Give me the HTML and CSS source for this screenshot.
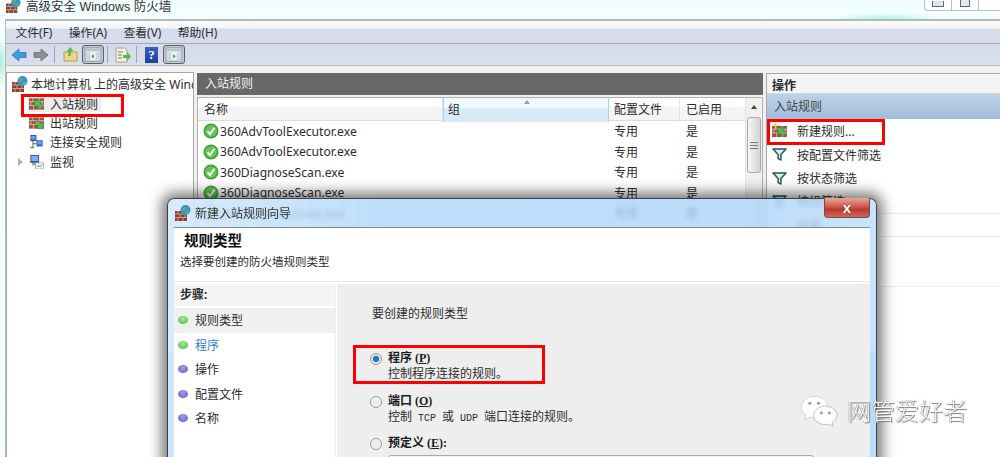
FILE: index.html
```html
<!DOCTYPE html>
<html lang="zh-CN">
<head>
<meta charset="utf-8">
<title>高级安全 Windows 防火墙</title>
<link rel="stylesheet" href="styles.css">
</head>
<body>
<svg class="defs" width="0" height="0" aria-hidden="true">
  <defs>
    <symbol id="wall" viewBox="0 0 16 14">
      <rect x="0" y="1" width="16" height="12" fill="#9c5442"/>
      <path d="M0 4.500h16M0 8.500h16M4 1v3.500M11 1v3.500M2 4.500v4M8 4.500v4M14 4.500v4M5 8.500V13M11 8.500V13" stroke="#dcc4b4" stroke-width=".9" fill="none"/>
    </symbol>
    <symbol id="wall-in" viewBox="0 0 16 14">
      <use href="#wall"/>
      <path d="M6 3l7 0-2 2.200 4 4-3 3-4-4L6 10z" fill="#52bd55" stroke="#2f8f3a" stroke-width=".6"/>
    </symbol>
    <symbol id="wall-out" viewBox="0 0 16 14">
      <use href="#wall"/>
      <path d="M15 13l-7 0 2-2.200-4-4 3-3 4 4L15 6z" fill="#52bd55" stroke="#2f8f3a" stroke-width=".6"/>
    </symbol>
    <symbol id="wall-globe" viewBox="0 0 16 16">
      <rect x="0" y="6" width="12" height="10" fill="#8c3f2e"/>
      <path d="M0 9h12M0 12.500h12M3 6v3M8 6v3M5 9v3.500M10 9v3.500M3 12.500V16M8 12.500V16" stroke="#d8b8a8" stroke-width=".8" fill="none"/>
      <circle cx="10.500" cy="5" r="5" fill="#3d8fd8"/>
      <path d="M7.500 3.500c1.500-2 3-1.500 3.500-.5s-1.500 1.500-1.500 2.500-2 1-2-2zM11.500 6c1-.5 2.500-.5 3 .5-.5 1.500-2 2.500-3 2.500s-1-2 0-3z" fill="#5cb85a"/>
    </symbol>
    <symbol id="link" viewBox="0 0 16 16">
      <rect x="1" y="0" width="7" height="7" fill="#2a55c0"/><rect x="2" y="1" width="5" height="4" fill="#6aa0ea"/>
      <rect x="8" y="6" width="7" height="7" fill="#2a55c0"/><rect x="9" y="7" width="5" height="4" fill="#6aa0ea"/>
      <path d="M0 15h6l-2-3z" fill="#43ad4a"/><path d="M4 7v5M8 10H5" stroke="#333" fill="none"/>
    </symbol>
    <symbol id="monitor" viewBox="0 0 16 16">
      <rect x="1" y="0" width="10" height="9" fill="#2a4fa8"/><rect x="2" y="1" width="8" height="6" fill="#7fb0ea"/>
      <rect x="3" y="9" width="6" height="3" fill="#9aa0a8"/>
      <rect x="7" y="9" width="9" height="7" fill="#f4f7f2" stroke="#8a9a8a" stroke-width=".7"/>
      <path d="M8 14l2-2 2 1.500 3-3" stroke="#38a040" fill="none"/>
    </symbol>
    <symbol id="ok" viewBox="0 0 16 16">
      <circle cx="8" cy="8" r="7.500" fill="#3e9a3b"/><circle cx="8" cy="8" r="6" fill="#62c552"/>
      <path d="M4.500 8.200l2.500 3 4.500-6.500" stroke="#fff" stroke-width="2" fill="none"/>
    </symbol>
    <symbol id="funnel" viewBox="0 0 16 14">
      <path d="M1 1h14L9.500 7v6l-3-1.500V7z" fill="#d8ece8" stroke="#1f5a5c" stroke-width="1.600" stroke-linejoin="round"/>
    </symbol>
    <symbol id="star" viewBox="0 0 8 8">
      <path d="M4 0l1 3 3 1-3 1-1 3-1-3-3-1 3-1z" fill="#f3c63a"/>
    </symbol>
    <symbol id="panel" viewBox="0 0 20 17">
      <rect x="1" y="1" width="18" height="15" fill="#f1f4f4" stroke="#7f8a90"/>
      <rect x="2" y="2" width="16" height="3" fill="#b8c4cc"/>
      <rect x="2" y="6" width="5" height="9" fill="#c7d8e6"/><rect x="13" y="6" width="5" height="9" fill="#c7d8e6"/>
    </symbol>
  </defs>
</svg>

<div class="app">
  <header class="titlebar">
    <svg class="title-icon"><use href="#wall-globe"/></svg>
    <span class="title-text">高级安全 Windows 防火墙</span>
    <div class="winbtns">
      <span class="winbtn"><i class="glyph-min"></i></span>
      <span class="winbtn"><i class="glyph-max"></i></span>
      <span class="winbtn winbtn-close"></span>
    </div>
  </header>

  <div class="frame">
    <nav class="menubar">
      <span>文件(F)</span><span>操作(A)</span><span>查看(V)</span><span>帮助(H)</span>
    </nav>
    <div class="toolbar">
      <svg class="tb-arrow" viewBox="0 0 16 14"><path d="M1 7l7-6v3.500h7v5H8V13z" fill="#3f9be0" stroke="#2a74b8" stroke-width=".8"/></svg>
      <svg class="tb-arrow tb-next" viewBox="0 0 16 14"><path d="M15 7L8 1v3.500H1v5h7V13z" fill="#8a8f92" stroke="#6a6f72" stroke-width=".8"/></svg>
      <i class="tb-sep"></i>
      <svg class="tb-up" viewBox="0 0 15 15"><path d="M1 5h13v9H1z" fill="#ecd68c" stroke="#b59a4a"/><path d="M5 9l1-4H3.500L7 0l3.500 4H8L7.500 9z" fill="#5ab44a"/></svg>
      <span class="tb-btn"><svg viewBox="0 0 20 17"><use href="#panel"/><path d="M11 8v5l-3-2.500z" fill="#36a040"/></svg></span>
      <i class="tb-sep tb-sep-b"></i>
      <svg class="tb-export" viewBox="0 0 16 16"><path d="M1 1h9l2 2v12H1z" fill="#f6f1dc" stroke="#a8a48c"/><path d="M3 5h5M3 8h4M3 11h4" stroke="#777"/><path d="M8 8h4V5l4 4.500-4 4.500v-3H8z" fill="#55b84a"/></svg>
      <i class="tb-sep tb-sep-c"></i>
      <span class="tb-help">?</span>
      <span class="tb-btn tb-btn-b"><svg viewBox="0 0 20 17"><use href="#panel"/><path d="M9 8v5l3-2.500z" fill="#36a040"/></svg></span>
    </div>

    <main class="panes">
      <aside class="tree">
        <div class="tree-row tree-root"><svg class="tree-icon"><use href="#wall-globe"/></svg><span>本地计算机 上的高级安全 Windows 防火墙</span></div>
        <div class="tree-row tree-child"><span class="tree-sel"><svg class="tree-icon"><use href="#wall-in"/></svg><span>入站规则</span></span></div>
        <div class="tree-row tree-child"><svg class="tree-icon"><use href="#wall-out"/></svg><span>出站规则</span></div>
        <div class="tree-row tree-child"><svg class="tree-icon"><use href="#link"/></svg><span>连接安全规则</span></div>
        <div class="tree-row tree-child tree-last"><i class="twisty"></i><svg class="tree-icon"><use href="#monitor"/></svg><span>监视</span></div>
      </aside>

      <section class="center">
        <h2 class="center-head">入站规则</h2>
        <div class="table-wrap">
          <div class="table">
            <div class="thead">
              <span class="th">名称</span>
              <span class="th th-sorted">组<i class="sort"></i></span>
              <span class="th">配置文件</span>
              <span class="th th-last">已启用</span>
            </div>
            <div class="tr"><span class="td-name"><svg class="ok"><use href="#ok"/></svg>360AdvToolExecutor.exe</span><span></span><span>专用</span><span>是</span></div>
            <div class="tr"><span class="td-name"><svg class="ok"><use href="#ok"/></svg>360AdvToolExecutor.exe</span><span></span><span>专用</span><span>是</span></div>
            <div class="tr"><span class="td-name"><svg class="ok"><use href="#ok"/></svg>360DiagnoseScan.exe</span><span></span><span>专用</span><span>是</span></div>
            <div class="tr"><span class="td-name"><svg class="ok"><use href="#ok"/></svg>360DiagnoseScan.exe</span><span></span><span>专用</span><span>是</span></div>
            <div class="tr"><span class="td-name"><svg class="ok"><use href="#ok"/></svg>360DiagnoseScan.exe</span><span></span><span>专用</span><span>是</span></div>
          </div>
          <div class="scroll">
            <i class="scroll-up"></i>
            <div class="scroll-thumb"><i></i></div>
          </div>
        </div>
      </section>

      <aside class="actions">
        <h3 class="actions-head">操作</h3>
        <div class="actions-sub">入站规则</div>
        <div class="action action-new"><svg class="action-icon"><use href="#wall-in"/></svg><svg class="action-star"><use href="#star"/></svg><span>新建规则...</span></div>
        <div class="action"><svg class="action-icon"><use href="#funnel"/></svg><span>按配置文件筛选</span></div>
        <div class="action"><svg class="action-icon"><use href="#funnel"/></svg><span>按状态筛选</span></div>
        <div class="action action-line"><svg class="action-icon"><use href="#funnel"/></svg><span>按组筛选</span></div>
        <div class="action action-line"><span class="action-blank"></span><span>查看</span></div>
        <div class="action action-tall"></div>
      </aside>
    </main>
  </div>

  <div class="mark mark-tree"></div>
  <div class="mark mark-action"></div>

  <section class="dialog">
    <header class="dlg-title">
      <svg class="dlg-icon"><use href="#wall-globe"/></svg>
      <span>新建入站规则向导</span>
      <span class="dlg-close"><b>x</b></span>
    </header>
    <div class="dlg-body">
      <div class="dlg-head">
        <h1>规则类型</h1>
        <p>选择要创建的防火墙规则类型</p>
      </div>
      <div class="dlg-main">
        <div class="steps">
          <div class="steps-head">步骤:</div>
          <ul class="step-list">
            <li class="step step-current"><i class="dot dot-green"></i>规则类型</li>
            <li class="step step-next"><i class="dot dot-green"></i>程序</li>
            <li class="step"><i class="dot"></i>操作</li>
            <li class="step"><i class="dot"></i>配置文件</li>
            <li class="step"><i class="dot"></i>名称</li>
          </ul>
        </div>
        <div class="content">
          <p class="question">要创建的规则类型</p>
          <div class="opt opt-first">
            <i class="radio radio-on"></i>
            <div><div class="opt-name">程序 (<u>P</u>)</div><div class="opt-desc">控制程序连接的规则。</div></div>
          </div>
          <div class="opt">
            <i class="radio"></i>
            <div><div class="opt-name">端口 (<u>O</u>)</div><div class="opt-desc">控制<span class="mono">TCP</span>或<span class="mono">UDP</span>端口连接的规则。</div></div>
          </div>
          <div class="opt opt-last">
            <i class="radio"></i>
            <div class="opt-wide"><div class="opt-name">预定义 (<u>E</u>):</div><div class="select">BranchCache - 对等机发现</div></div>
          </div>
        </div>
      </div>
    </div>
  </section>

  <div class="mark mark-opt"></div>

  <div class="wechat">
    <svg class="wechat-logo" viewBox="0 0 40 34">
      <path d="M15 2C7.500 2 1.500 7 1.500 13c0 3.500 2 6.500 5 8.500L5 26l5-2.800c1.500.4 3 .6 5 .6 7.500 0 13.500-5 13.500-11S22.500 2 15 2z" fill="#fff" stroke="#c8c8c8" stroke-width=".7"/>
      <path d="M26 12c-6.500 0-12 4.300-12 9.500S19.500 31 26 31c1.500 0 2.800-.2 4-.6l4 2.300-1-3.800c3-1.800 5-4.600 5-7.900C38 16.300 32.500 12 26 12z" fill="#fff" stroke="#b0b0b0" stroke-width=".8"/>
      <circle cx="10" cy="9" r="1.600" fill="#9a9a9a"/><circle cx="19" cy="9" r="1.600" fill="#9a9a9a"/>
      <circle cx="22" cy="19" r="1.500" fill="#9a9a9a"/><circle cx="30" cy="19" r="1.500" fill="#9a9a9a"/>
    </svg>
    <span class="wechat-name">网管爱好者</span>
  </div>
</div>
</body>
</html>
```
FILE: styles.css
```css
* { box-sizing: border-box; }
html, body { margin: 0; padding: 0; }
body {
  width: 1000px;
  height: 457px;
  overflow: hidden;
  background: #fff;
  font-family: "Noto Sans", "Noto Sans CJK SC", sans-serif;
  font-size: 12px;
  color: #2c2c2c;
}
.defs { position: absolute; }
h1, h2, h3, p, ul { margin: 0; padding: 0; font: inherit; }
ul { list-style: none; }
i { display: block; }

.app {
  position: relative;
  width: 1000px;
  height: 457px;
  overflow: hidden;
  display: flex;
  flex-direction: column;
  filter: blur(.35px);
  background:
    radial-gradient(ellipse 10px 26px at 0 62px, #a8eedd, transparent),
    linear-gradient(#f6ffff, #f3fdfd);
}

/* title bar */
.titlebar {
  height: 19px;
  flex: none;
  display: flex;
  align-items: flex-start;
  padding-left: 6px;
  background: radial-gradient(ellipse 60px 6px at 885px 19px, #a8f5e6, transparent), linear-gradient(#f2fdff, #f4ffff);
}
.title-icon { width: 15px; height: 15px; margin-top: -2px; }
.title-text {
  margin-left: 5px;
  font-family: "Liberation Sans", "Noto Sans CJK SC", sans-serif;
  font-size: 12.500px;
  line-height: 14px;
  color: #333;
}
.winbtns {
  margin-left: auto;
  margin-right: -4px;
  display: flex;
  height: 11px;
  border: 1px solid #b8c0c4;
  border-top: 0;
  border-radius: 0 0 4px 4px;
  background: #fff;
}
.winbtn { width: 27px; border-right: 1px solid #b8c0c4; display: flex; justify-content: center; }
.winbtn-close { width: 24px; border-right: 0; }
.glyph-min { width: 12px; height: 6px; margin-top: 1px; border: 1px solid #666; border-top: 0; background: #dfe3ea; }
.glyph-max { width: 10px; height: 7px; border: 1.500px solid #666; border-top: 0; background: #e6e9ef; }

/* frame */
.frame {
  flex: 1;
  min-height: 0;
  margin-left: 5px;
  border-top: 2px solid #b4b8b8;
  border-left: 1px solid #b4b8b8;
  display: flex;
  flex-direction: column;
  background: #f0f0f0;
}
.menubar {
  height: 23px;
  flex: none;
  display: flex;
  align-items: center;
  gap: 16.500px;
  padding: 0 0 1px 9.500px;
  background: linear-gradient(#fbfbfc 0, #f4f5f8 7px, #d6dcec 8px, #d6dcec 100%);
  border-bottom: 1px solid #a6a8ac;
  font-size: 11.800px;
}
.toolbar {
  height: 22px;
  flex: none;
  display: flex;
  align-items: center;
  padding-left: 5px;
  background: linear-gradient(#d4daeb, #dadfec);
  border-bottom: 1px solid #b8bcc0;
}
.tb-arrow { width: 16px; height: 14px; }
.tb-next { margin-left: 6px; }
.tb-sep { width: 1px; height: 17px; margin-left: 5px; background: #a0a4ac; }
.tb-sep-b { margin-left: 3px; }
.tb-sep-c { margin-left: 5px; }
.tb-up { width: 15px; height: 15px; margin-left: 8px; }
.tb-btn {
  width: 22px;
  height: 19px;
  margin-left: 4px;
  border: 1px solid #5a5f66;
  border-radius: 3px;
  background: #c6c9d0;
  display: flex;
  align-items: center;
  justify-content: center;
}
.tb-btn svg { width: 18px; height: 15px; }
.tb-btn-b { margin-left: 5px; }
.tb-export { width: 16px; height: 16px; margin-left: 7px; }
.tb-help {
  width: 13px;
  height: 16px;
  margin-left: 8px;
  background: linear-gradient(#3c5fc0, #1f3f9c);
  color: #fff;
  font-weight: 700;
  font-size: 13px;
  line-height: 16px;
  text-align: center;
  font-family: "Liberation Serif", serif;
}

.panes {
  flex: 1;
  min-height: 0;
  display: flex;
  gap: 3px;
  padding-top: 7px;
}

/* tree */
.tree {
  width: 188px;
  flex: none;
  margin-top: -1px;
  background: #fff;
  border: 1px solid #a8a8a8;
  border-bottom: 0;
  overflow: hidden;
  white-space: nowrap;
}
.tree-row { display: flex; align-items: center; height: 19.300px; }
.tree-root { height: 21px; padding-left: 5px; }
.tree-child { padding-left: 22px; }
.tree-icon { width: 15px; height: 14px; flex: none; margin-right: 6px; }
.tree-root .tree-icon { height: 16px; width: 16px; margin-right: 3px; }
.tree-sel {
  display: flex;
  align-items: center;
  height: 16px;
  margin-left: -1px;
  padding: 0 3px 0 1px;
  background: #ececec;
  border-radius: 2px;
}
.tree-last { padding-left: 11px; }
.twisty {
  width: 0;
  height: 0;
  margin-right: 6px;
  border: 4px solid transparent;
  border-left: 5px solid #b0b0b0;
  border-right: 0;
}

/* center */
.center { width: 566px; flex: none; display: flex; flex-direction: column; }
.center-head {
  height: 22px;
  flex: none;
  padding-left: 8px;
  background: #686868;
  color: #f2f2f2;
  line-height: 21px;
}
.table-wrap {
  flex: 1;
  margin-top: 2px;
  background: #fff;
  border: 1px solid #b0b0b0;
  border-bottom: 0;
  display: flex;
}
.table { flex: 1; min-width: 0; }
.thead {
  height: 23px;
  display: grid;
  grid-template-columns: 245px 166px 71px 1fr;
  background: linear-gradient(#fff 0, #fff 40%, #f3f4f6 42%, #f4f4f4 100%);
  border-bottom: 1px solid #dcdcdc;
}
.th { position: relative; padding-left: 6px; line-height: 24px; border-right: 1px solid #e4e4e4; }
.th-sorted {
  padding-left: 4px;
  background: linear-gradient(#f2f9fd 0, #f2f9fd 40%, #d8ecf8 42%, #d6eaf7 100%);
  border-left: 1px solid #a6d4f0;
  border-right: 1px solid #a6d4f0;
}
.th:nth-child(3) { padding-left: 5px; }
.th-last { border-right: 0; }
.sort {
  position: absolute;
  top: 2px;
  left: 80px;
  border: 3.500px solid transparent;
  border-top: 0;
  border-bottom: 4px solid #87a5b8;
}
.tr {
  height: 20.500px;
  display: grid;
  grid-template-columns: 245px 166px 71px 1fr;
  align-items: center;
  white-space: nowrap;
}
.tr > span:nth-child(3) { padding-left: 5px; }
.tr > span:nth-child(4) { padding-left: 6px; }
.td-name { display: flex; align-items: center; padding-left: 5px; font-size: 12.150px; }
.ok { width: 16px; height: 16px; margin-right: 1px; flex: none; }
.scroll {
  width: 17px;
  flex: none;
  background: #f0f0f0;
  border-left: 1px solid #e4e4e4;
  position: relative;
}
.scroll-up {
  width: 0;
  margin: 7px auto 0;
  border: 3.500px solid transparent;
  border-top: 0;
  border-bottom: 4px solid #444;
}
.scroll-thumb {
  margin: 8px 1px 0;
  height: 56px;
  border: 1px solid #a8a8a8;
  border-radius: 3px;
  background: linear-gradient(90deg, #f6f6f6, #d4d4d4);
  display: flex;
  align-items: center;
  justify-content: center;
}
.scroll-thumb i { width: 8px; height: 7px; border-top: 1px solid #777; border-bottom: 1px solid #777; background: linear-gradient(#777, #777) center / 100% 1px no-repeat; }

/* actions */
.actions {
  flex: 1;
  min-width: 0;
  background: #fff;
  border-left: 1px solid #a8a8a8;
  border-top: 1px solid #a8a8a8;
}
.actions-head {
  height: 20px;
  padding-left: 5px;
  font-weight: 700;
  line-height: 23px;
  background: #f4f4f4;
  border-bottom: 1px solid #d8d8d8;
}
.actions-sub {
  height: 25px;
  padding-left: 7px;
  line-height: 25px;
  color: #444;
  background: linear-gradient(#bdd2e8, #9fbcdc);
}
.action {
  position: relative;
  height: 23.500px;
  display: flex;
  align-items: center;
  padding-left: 5px;
}
.action-new { height: 24px; }
.action-icon { width: 15px; height: 13px; margin-right: 10px; flex: none; }
.action-blank { width: 25px; }
.action-star { position: absolute; left: 5px; top: 3px; width: 7px; height: 7px; }
.action-line { border-bottom: 1px solid #eaeaea; }
.action-tall { height: 49.500px; border-bottom: 1px solid #eaeaea; }

/* dialog */
.dialog {
  position: absolute;
  left: 167px;
  top: 198px;
  width: 710px;
  height: 275px;
  border: 1px solid #3a4248;
  border-bottom: 0;
  border-radius: 7px 7px 0 0;
  background:
    linear-gradient(90deg, rgba(232, 243, 252, .55) 0, rgba(176, 216, 250, .45) 30%, rgba(170, 212, 250, .45) 80%, rgba(205, 228, 252, .55) 100%),
    linear-gradient(rgba(170, 212, 250, .65) 0, rgba(170, 212, 250, .65) 152px, rgba(140, 196, 248, .75) 153px);
  -webkit-backdrop-filter: blur(2.500px);
  backdrop-filter: blur(2.500px);
  box-shadow: 0 0 14px 5px rgba(0, 0, 0, .55);
  display: flex;
  flex-direction: column;
}
.dlg-title {
  height: 28px;
  flex: none;
  position: relative;
  display: flex;
  align-items: center;
  padding-left: 7px;
  color: #333;
}
.dlg-icon { width: 16px; height: 16px; margin-right: 4px; }
.dlg-close {
  position: absolute;
  right: 6px;
  top: -1px;
  width: 46px;
  height: 20px;
  border: 1px solid #7a4a44;
  border-top: 0;
  border-radius: 0 0 4px 4px;
  background: linear-gradient(#e6a89c 0, #d0584a 45%, #b93a2e 60%, #cc6a5c 100%);
  color: #fff;
  display: flex;
  align-items: center;
  justify-content: center;
}
.dlg-close b { font-family: "Liberation Sans", sans-serif; font-size: 15px; line-height: 16px; text-shadow: 0 0 2px #555; }
.dlg-body {
  flex: 1;
  min-height: 0;
  margin: 0 6px;
  border-top: 1px solid #808890;
  background: #fff;
  display: flex;
  flex-direction: column;
}
.dlg-head { height: 54px; flex: none; padding: 1px 0 0 10px; border-bottom: 1px solid #e8e8e8; }
.dlg-head h1 { font-size: 14.500px; font-weight: 700; color: #111; line-height: 22px; }
.dlg-head p { margin: 3px 0 0 -4px; line-height: 16px; font-size: 11.500px; }
.dlg-main { flex: 1; display: flex; padding-top: 2px; }
.steps { width: 162px; flex: none; border-right: 1px solid #eee; }
.steps-head { height: 22px; padding-left: 6px; font-weight: 700; line-height: 22px; background: #f4f4f4; }
.step-list { padding-top: 2px; }
.step { height: 24.500px; display: flex; align-items: center; padding-left: 4px; }
.step-current { background: #f0f0f0; }
.step-next { color: #2a7fd8; }
.dot {
  width: 10px;
  height: 8px;
  border-radius: 50%;
  margin-right: 7px;
  background: radial-gradient(circle at 50% 35%, #a0a0f0, #5858c0);
}
.dot-green { background: radial-gradient(circle at 50% 35%, #a0ee90, #3cb83c); }

.content { flex: 1; margin-left: 1px; background: #eee; padding: 0 35px; }
.question { margin-top: 22px; line-height: 16px; }
.opt { display: flex; align-items: flex-start; margin-left: -2px; }
.opt-first { margin-top: 29px; }
.opt + .opt { margin-top: 13px; }
.opt-last { margin-top: 10px !important; }
.opt-wide { flex: 1; }
.radio {
  width: 12px;
  height: 12px;
  margin: 2px 6px 0 0;
  flex: none;
  border: 1px solid #9a9a9a;
  border-radius: 50%;
  background: radial-gradient(circle, #e8e8e8, #fafafa);
}
.radio-on { background: radial-gradient(circle, #1f78b8 0, #1f78b8 40%, #dce8f0 48%, #e8e8e8 100%); }
.opt-name {
  font-family: "Liberation Serif", "Noto Sans CJK SC", serif;
  font-weight: 700;
  line-height: 15px;
  color: #1c1c1c;
}
.opt-desc { line-height: 15px; }
.mono { font-family: "Liberation Mono", monospace; font-size: 10px; margin: 0 6px; }
.select {
  margin-top: 4px;
  width: 426px;
  height: 20px;
  padding-left: 90px;
  border: 1px solid #a8a8a8;
  border-radius: 3px;
  background: #f4f4f4;
  line-height: 18px;
  color: #444;
}

/* annotations */
.mark { position: absolute; border: 3px solid #f00; }
.mark-tree { left: 21px; top: 94px; width: 103px; height: 23px; }
.mark-action { left: 767px; top: 119px; width: 118px; height: 26px; }
.mark-opt { left: 353px; top: 345px; width: 192px; height: 39px; }

/* watermark */
.wechat { position: absolute; left: 800px; top: 394px; display: flex; align-items: center; gap: 8px; }
.wechat-logo { width: 39px; height: 34px; }
.wechat-name {
  font-size: 24px;
  font-weight: 300;
  line-height: 30px;
  color: #f6f6f6;
  text-shadow: 1px 1px 1px #777, -.5px -.5px 0 #999;
}
```
